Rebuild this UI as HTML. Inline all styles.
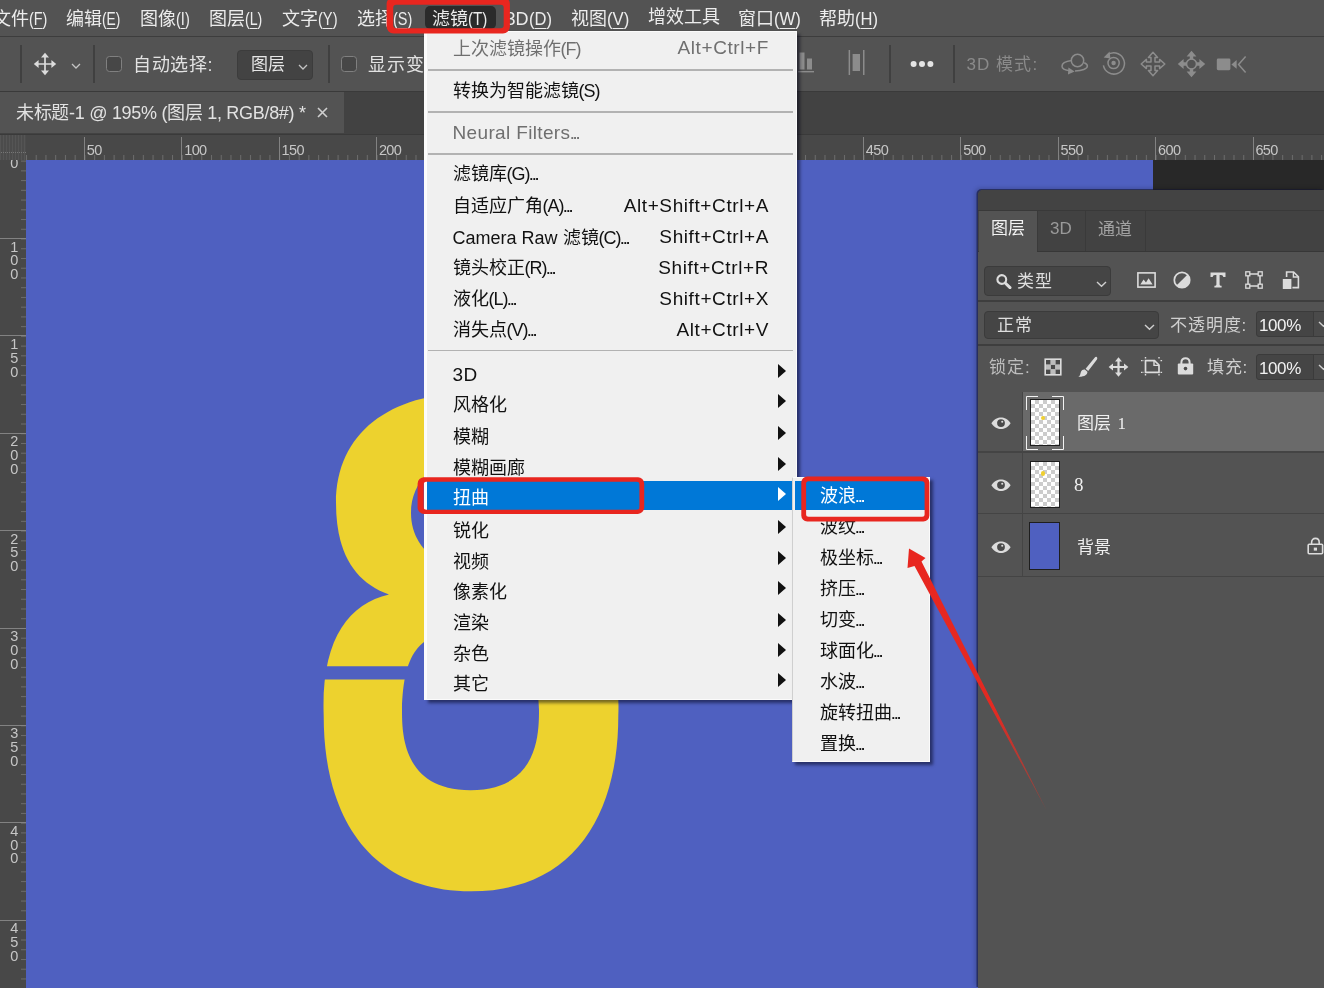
<!DOCTYPE html>
<html lang="zh-CN">
<head>
<meta charset="utf-8">
<title>Photoshop</title>
<style>
html,body{margin:0;padding:0;}
body{width:1324px;height:988px;position:relative;overflow:hidden;background:#535353;font-family:"Liberation Sans",sans-serif;color:#e6e6e6;}
#root{position:absolute;left:0;top:0;width:1324px;height:988px;overflow:hidden;will-change:transform;}
.a{position:absolute;}
.t{position:absolute;white-space:nowrap;line-height:1;}
u{text-decoration:underline;text-underline-offset:2.5px;text-decoration-thickness:1px;}
/* top menubar */
#menubar{left:0;top:0;width:1324px;height:36px;background:#535353;border-bottom:1px solid #3d3d3d;}
#menubar .t{font-size:18px;top:8.7px;color:#ececec;}
.mp{display:inline-block;font-size:19px;transform-origin:0 50%;}
/* options bar */
#optbar{left:0;top:37px;width:1324px;height:54px;background:#535353;border-bottom:2px solid #3a3a3a;}
.vsep{position:absolute;width:2px;background:#404040;top:8px;height:38px;}
/* tab bar */
#tabbar{left:0;top:92px;width:1324px;height:42px;background:#424242;}
#tab{left:0;top:0;width:344px;height:41px;background:#535353;}
/* rulers */
#hruler{left:0;top:134px;width:1324px;height:26px;background:#484848;border-top:1px solid #3a3a3a;box-sizing:border-box;}
#vruler{left:0;top:160px;width:26px;height:828px;background:#484848;overflow:hidden;}
.rl{position:absolute;font-size:14.5px;letter-spacing:-0.6px;color:#c6c6c6;line-height:1;}
/* canvas */
#canvas{left:26px;top:160px;width:1127px;height:828px;background:#4f60c0;}
#paste{left:1153px;top:160px;width:171px;height:828px;background:#282828;}
/* menus */
.menu{position:absolute;background:#f0f0f0;color:#000;box-shadow:3px 3px 3px rgba(0,0,20,.5);border:1px solid #fbfbfb;box-sizing:border-box;}
.menu .t{font-size:18px;color:#111;}
.menu .d{color:#6f6f6f;}
.menu .e{font-size:13px;letter-spacing:-0.7px;font-weight:bold;}
.menu .p{letter-spacing:-1px;}
.menu .n{font-size:19px;letter-spacing:.35px;}
.menu .k{font-size:19px;letter-spacing:.6px;}
.msep{position:absolute;height:2px;background:#b2b2b2;left:2px;right:3px;}
.arr{position:absolute;width:0;height:0;border-left:8px solid #111;border-top:7px solid transparent;border-bottom:7px solid transparent;}
/* layers panel */
#panel{left:978px;top:190px;width:346px;height:798px;background:#535353;border-top-left-radius:5px;box-shadow:-1.5px -1px 0 rgba(22,24,50,.6),-3px -2px 4px rgba(0,0,0,.18);overflow:hidden;}
#panel .t{color:#dedede;font-size:17px;}
</style>
</head>
<body>
<div id="root">

<!-- MENUBAR -->
<div id="menubar" class="a">
  <div class="a" style="left:425px;top:6px;width:71px;height:22.5px;background:#2b2b2b;border-radius:5px;"></div>
  <div class="t" style="left:-6.9px;">文件<span class="mp" style="transform:scaleX(0.758);">(<u>F</u>)</span></div>
  <div class="t" style="left:66.3px;">编辑<span class="mp" style="transform:scaleX(0.726);">(<u>E</u>)</span></div>
  <div class="t" style="left:140.0px;">图像<span class="mp" style="transform:scaleX(0.769);">(<u>I</u>)</span></div>
  <div class="t" style="left:209.1px;">图层<span class="mp" style="transform:scaleX(0.745);">(<u>L</u>)</span></div>
  <div class="t" style="left:282.0px;">文字<span class="mp" style="transform:scaleX(0.77);">(<u>Y</u>)</span></div>
  <div class="t" style="left:357.4px;">选择<span class="mp" style="transform:scaleX(0.762);">(<u>S</u>)</span></div>
  <div class="t" style="left:432.2px;">滤镜<span class="mp" style="transform:scaleX(0.795);">(<u>T</u>)</span></div>
  <div class="t" style="left:505.5px;">3D<span class="mp" style="transform:scaleX(0.871);">(<u>D</u>)</span></div>
  <div class="t" style="left:571.1px;">视图<span class="mp" style="transform:scaleX(0.88);">(<u>V</u>)</span></div>
  <div class="t" style="left:648.1px;top:8px;">增效工具</div>
  <div class="t" style="left:738.0px;">窗口<span class="mp" style="transform:scaleX(0.879);">(<u>W</u>)</span></div>
  <div class="t" style="left:818.9px;">帮助<span class="mp" style="transform:scaleX(0.872);">(<u>H</u>)</span></div>
</div>

<!-- OPTIONS BAR -->
<div id="optbar" class="a">
  <div class="vsep" style="left:20px;"></div>
  <div class="vsep" style="left:93px;"></div>
  <div class="vsep" style="left:328px;"></div>
  <div class="vsep" style="left:889px;"></div>
  <div class="vsep" style="left:953px;"></div>
  <svg class="a" style="left:32.6px;top:15.4px;" width="24" height="24" viewBox="0 0 24 24"><path d="M12,0.8 L16,5.6 H12.85 V11.15 H18.4 V8 L23.2,12 L18.4,16 V12.85 H12.85 V18.4 H16 L12,23.2 L8,18.4 H11.15 V12.85 H5.6 V16 L0.8,12 L5.6,8 V11.15 H11.15 V5.6 H8 Z" fill="#dcdcdc"/></svg>
  <svg class="a" style="left:71px;top:26px;" width="10" height="7" viewBox="0 0 10 7"><path d="M1,1 L5,5 L9,1" fill="none" stroke="#c4c4c4" stroke-width="1.3"/></svg>
  <div class="a" style="left:106px;top:19px;width:16px;height:16px;box-sizing:border-box;border:1px solid #808080;border-radius:3.5px;background:#474747;"></div>
  <div class="t" style="left:133px;top:19px;font-size:18px;letter-spacing:.6px;color:#e2e2e2;">自动选择:</div>
  <div class="a" style="left:237px;top:13px;width:76px;height:30px;box-sizing:border-box;background:#434343;border:1px solid #3c3c3c;border-radius:4px;"></div>
  <div class="t" style="left:251px;top:19px;font-size:17px;color:#e6e6e6;">图层</div>
  <svg class="a" style="left:298px;top:27px;" width="10" height="7" viewBox="0 0 10 7"><path d="M1,1 L5,5 L9,1" fill="none" stroke="#c4c4c4" stroke-width="1.3"/></svg>
  <div class="a" style="left:341px;top:19px;width:16px;height:16px;box-sizing:border-box;border:1px solid #808080;border-radius:3.5px;background:#474747;"></div>
  <div class="t" style="left:368px;top:19px;font-size:18px;letter-spacing:1px;color:#e2e2e2;">显示变换控件</div>
  <svg class="a" style="left:798px;top:13px;" width="17" height="23" viewBox="0 0 17 23"><rect x="1.5" y="2.5" width="5" height="17" fill="#8c8c8c"/><rect x="9" y="8.5" width="5" height="11" fill="#8c8c8c"/><rect x="0" y="21" width="16" height="1.4" fill="#8c8c8c"/></svg>
  <svg class="a" style="left:848px;top:12px;" width="18" height="27" viewBox="0 0 18 27"><rect x="0.6" y="1" width="1.5" height="25" fill="#8c8c8c"/><rect x="15" y="1" width="1.5" height="25" fill="#8c8c8c"/><rect x="4.6" y="5" width="7.4" height="17" fill="#8c8c8c"/></svg>
  <svg class="a" style="left:909px;top:22px;" width="26" height="10" viewBox="0 0 26 10"><circle cx="4.6" cy="5" r="3" fill="#e4e4e4"/><circle cx="13" cy="5" r="3" fill="#e4e4e4"/><circle cx="21.4" cy="5" r="3" fill="#e4e4e4"/></svg>
  <div class="t" style="left:966.5px;top:18.7px;font-size:17px;letter-spacing:1.1px;color:#8a8a8a;">3D 模式:</div>
  <svg class="a" style="left:1060px;top:14.5px;" width="29" height="24" viewBox="0 0 29 24"><circle cx="17.5" cy="8.5" r="6.2" fill="none" stroke="#8c8c8c" stroke-width="1.5"/><path d="M11.5,8.6 C6,9.4 2,11.6 2,14.2 C2,16.4 5.6,18.2 10,18.8 M15,19 C22,18.8 27.4,16.8 27.4,14 C27.4,12.8 26.2,11.6 24.2,10.8" fill="none" stroke="#8c8c8c" stroke-width="1.5"/><path d="M8.4,15.6 L14.6,19.4 L8,22.4 Z" fill="#8c8c8c"/></svg>
  <svg class="a" style="left:1100px;top:11.5px;" width="27" height="27" viewBox="0 0 27 27"><path d="M7.2,6.2 A10.6,10.6 0 1 1 3.4,16.4" fill="none" stroke="#8c8c8c" stroke-width="1.5"/><path d="M3.6,8.6 L9.6,2.6 L10.4,9.6 Z" fill="#8c8c8c"/><circle cx="13.6" cy="14" r="5.6" fill="none" stroke="#8c8c8c" stroke-width="1.5"/><circle cx="13.6" cy="14" r="2.2" fill="#8c8c8c"/></svg>
  <svg class="a" style="left:1139.5px;top:13.5px;" width="26" height="26" viewBox="0 0 26 26"><path d="M13,1.2 L17.6,6.4 H15 V11 H19.6 V8.4 L24.8,13 L19.6,17.6 V15 H15 V19.6 H17.6 L13,24.8 L8.4,19.6 H11 V15 H6.4 V17.6 L1.2,13 L6.4,8.4 V11 H11 V6.4 H8.4 Z" fill="none" stroke="#8c8c8c" stroke-width="1.5" stroke-linejoin="round"/></svg>
  <svg class="a" style="left:1177px;top:12.5px;" width="29" height="28" viewBox="0 0 29 28"><path d="M14.5,0.8 L19.4,6.6 H16.2 V9.4 H12.8 V6.6 H9.6 Z M14.5,27.2 L19.4,21.4 H16.2 V18.6 H12.8 V21.4 H9.6 Z M0.8,14 L6.6,9.1 V12.3 H9.4 V15.7 H6.6 V18.9 Z M28.2,14 L22.4,9.1 V12.3 H19.6 V15.7 H22.4 V18.9 Z" fill="#8c8c8c"/><circle cx="14.5" cy="14" r="5" fill="none" stroke="#8c8c8c" stroke-width="1.6"/></svg>
  <svg class="a" style="left:1216px;top:18px;" width="31" height="19" viewBox="0 0 31 19"><rect x="0.8" y="3.6" width="13.6" height="11.6" rx="1.4" fill="#8c8c8c"/><path d="M15.4,9.4 L20.6,5 V13.8 Z" fill="#8c8c8c"/><path d="M29.6,1.4 L22.6,9.4 L29.6,17.4" fill="none" stroke="#8c8c8c" stroke-width="1.5"/></svg>
</div>

<!-- TAB BAR -->
<div id="tabbar" class="a">
  <div id="tab" class="a">
    <div class="t" style="left:16px;top:11.8px;font-size:18px;letter-spacing:-0.3px;color:#e2e2e2;">未标题-1 @ 195% (图层 1, RGB/8#) *</div>
    <svg class="a" style="left:317px;top:15px;" width="11" height="11" viewBox="0 0 11 11"><path d="M1,1 L10,10 M10,1 L1,10" stroke="#cfcfcf" stroke-width="1.6"/></svg>
  </div>
</div>

<!-- RULERS -->
<div id="hruler" class="a">
  <svg class="a" style="left:26px;top:20px;" width="1298" height="5"><defs><pattern id="ph" x="9.71" y="0" width="9.738" height="5" patternUnits="userSpaceOnUse"><rect x="0" y="0" width="1" height="5" fill="#6c6c6c"/></pattern></defs><rect width="1298" height="5" fill="url(#ph)"/></svg>
  <div class="a" style="left:83.9px;top:2px;width:1px;height:23px;background:#828282;"></div>
  <div class="rl" style="left:86.8px;top:7.5px;">50</div>
  <div class="a" style="left:181.3px;top:2px;width:1px;height:23px;background:#828282;"></div>
  <div class="rl" style="left:184.2px;top:7.5px;">100</div>
  <div class="a" style="left:278.7px;top:2px;width:1px;height:23px;background:#828282;"></div>
  <div class="rl" style="left:281.6px;top:7.5px;">150</div>
  <div class="a" style="left:376.0px;top:2px;width:1px;height:23px;background:#828282;"></div>
  <div class="rl" style="left:378.9px;top:7.5px;">200</div>
  <div class="a" style="left:473.4px;top:2px;width:1px;height:23px;background:#828282;"></div>
  <div class="rl" style="left:476.3px;top:7.5px;">250</div>
  <div class="a" style="left:570.8px;top:2px;width:1px;height:23px;background:#828282;"></div>
  <div class="rl" style="left:573.7px;top:7.5px;">300</div>
  <div class="a" style="left:668.2px;top:2px;width:1px;height:23px;background:#828282;"></div>
  <div class="rl" style="left:671.1px;top:7.5px;">350</div>
  <div class="a" style="left:765.6px;top:2px;width:1px;height:23px;background:#828282;"></div>
  <div class="rl" style="left:768.5px;top:7.5px;">400</div>
  <div class="a" style="left:862.9px;top:2px;width:1px;height:23px;background:#828282;"></div>
  <div class="rl" style="left:865.8px;top:7.5px;">450</div>
  <div class="a" style="left:960.3px;top:2px;width:1px;height:23px;background:#828282;"></div>
  <div class="rl" style="left:963.2px;top:7.5px;">500</div>
  <div class="a" style="left:1057.7px;top:2px;width:1px;height:23px;background:#828282;"></div>
  <div class="rl" style="left:1060.6px;top:7.5px;">550</div>
  <div class="a" style="left:1155.1px;top:2px;width:1px;height:23px;background:#828282;"></div>
  <div class="rl" style="left:1158.0px;top:7.5px;">600</div>
  <div class="a" style="left:1252.5px;top:2px;width:1px;height:23px;background:#828282;"></div>
  <div class="rl" style="left:1255.4px;top:7.5px;">650</div>
  <div class="a" style="left:0;top:0;width:26px;height:25px;background:#4c4c4c repeating-linear-gradient(90deg,#555 0,#555 1px,transparent 1px,transparent 3px);box-sizing:border-box;"></div>
  <div class="a" style="left:1px;top:17px;width:25px;height:0;border-top:1px dotted #767676;"></div>
</div>
<div id="vruler" class="a">
  <svg class="a" style="left:21px;top:0;" width="5" height="828"><defs><pattern id="pv" x="0" y="0.63" width="5" height="9.736" patternUnits="userSpaceOnUse"><rect x="0" y="0" width="5" height="1" fill="#6c6c6c"/></pattern></defs><rect width="5" height="828" fill="url(#pv)"/></svg>
  <div class="rl" style="left:10px;top:-16.7px;line-height:13.8px;text-align:center;width:8px;">5<br>0</div>
  <div class="a" style="left:0;top:78.0px;width:26px;height:1px;background:#828282;"></div>
  <div class="rl" style="left:10px;top:80.6px;line-height:13.8px;text-align:center;width:8px;">1<br>0<br>0</div>
  <div class="a" style="left:0;top:175.4px;width:26px;height:1px;background:#828282;"></div>
  <div class="rl" style="left:10px;top:178.0px;line-height:13.8px;text-align:center;width:8px;">1<br>5<br>0</div>
  <div class="a" style="left:0;top:272.7px;width:26px;height:1px;background:#828282;"></div>
  <div class="rl" style="left:10px;top:275.3px;line-height:13.8px;text-align:center;width:8px;">2<br>0<br>0</div>
  <div class="a" style="left:0;top:370.1px;width:26px;height:1px;background:#828282;"></div>
  <div class="rl" style="left:10px;top:372.7px;line-height:13.8px;text-align:center;width:8px;">2<br>5<br>0</div>
  <div class="a" style="left:0;top:467.5px;width:26px;height:1px;background:#828282;"></div>
  <div class="rl" style="left:10px;top:470.1px;line-height:13.8px;text-align:center;width:8px;">3<br>0<br>0</div>
  <div class="a" style="left:0;top:564.8px;width:26px;height:1px;background:#828282;"></div>
  <div class="rl" style="left:10px;top:567.4px;line-height:13.8px;text-align:center;width:8px;">3<br>5<br>0</div>
  <div class="a" style="left:0;top:662.2px;width:26px;height:1px;background:#828282;"></div>
  <div class="rl" style="left:10px;top:664.8px;line-height:13.8px;text-align:center;width:8px;">4<br>0<br>0</div>
  <div class="a" style="left:0;top:759.5px;width:26px;height:1px;background:#828282;"></div>
  <div class="rl" style="left:10px;top:762.1px;line-height:13.8px;text-align:center;width:8px;">4<br>5<br>0</div>
</div>

<!-- CANVAS -->
<div id="canvas" class="a">
  <svg class="a" style="left:0;top:0;" width="1127" height="828" viewBox="26 160 1127 828">
    <defs>
      <clipPath id="cut"><rect x="300" y="380" width="340" height="286.3"/><rect x="300" y="679.6" width="340" height="230"/></clipPath>
      <filter id="soft"><feGaussianBlur stdDeviation="0.7"/></filter>
    </defs>
    <g clip-path="url(#cut)">
    <path filter="url(#soft)" fill="#edd22d" fill-rule="evenodd" d="
      M471,393 C390,393 336,433 336,503 C336,552 354,582 389,594.5
      C348,604 321,640 323.7,716 C323.7,815.2 368.4,891.3 471,891.3 C573.6,891.3 618.3,815.2 618.3,716
      C621,640 594,604 553,594.5 C588,582 606,552 606,503 C606,433 552,393 471,393 Z
      M471,457.5 C436.2,457.5 411,480.8 411,513 C411,545.2 436.2,568.5 471,568.5 C505.8,568.5 531,545.2 531,513 C531,480.8 505.8,457.5 471,457.5 Z
      M470.5,630 C421,630 403.5,650 402,710 C402,733.2 402.6,790.2 470.5,790.2 C538.4,790.2 539,733.2 539,710 C537.5,650 520,630 470.5,630 Z"/>
    </g>
  </svg>
</div>
<div id="paste" class="a"></div>

<!-- LAYERS PANEL -->
<div id="panel" class="a">
  <div class="a" style="left:0;top:0;width:346px;height:21px;background:#434343;border-bottom:1px solid #393939;box-sizing:border-box;"></div>
  <div class="a" style="left:0;top:21px;width:346px;height:41px;background:#424242;border-bottom:1px solid #373737;box-sizing:border-box;"></div>
  <div class="a" style="left:1px;top:21px;width:58px;height:42px;background:#535353;"></div>
  <div class="a" style="left:59px;top:21px;width:1px;height:40px;background:#3a3a3a;"></div>
  <div class="a" style="left:107px;top:21px;width:1px;height:40px;background:#3a3a3a;"></div>
  <div class="a" style="left:167px;top:21px;width:1px;height:40px;background:#3a3a3a;"></div>
  <div class="t" style="left:13px;top:30px;color:#f2f2f2;">图层</div>
  <div class="t" style="left:72px;top:30px;color:#9a9a9a;">3D</div>
  <div class="t" style="left:120px;top:30.5px;color:#a2a2a2;">通道</div>

  <div class="a" style="left:6px;top:76px;width:127px;height:30px;background:#454545;border:1px solid #3b3b3b;border-radius:4px;box-sizing:border-box;"></div>
  <div class="t" style="left:39px;top:83px;letter-spacing:1px;">类型</div>

  <div class="a" style="left:0px;top:110px;width:346px;height:2px;background:#3e3e3e;"></div>

  <div class="a" style="left:6px;top:121px;width:175px;height:28px;background:#454545;border:1px solid #3b3b3b;border-radius:4px;box-sizing:border-box;"></div>
  <div class="t" style="left:19px;top:127px;letter-spacing:.8px;">正常</div>
  <div class="t" style="left:192px;top:127px;letter-spacing:.9px;color:#cfcfcf;">不透明度:</div>
  <div class="a" style="left:278px;top:121px;width:58px;height:26px;background:#454545;border:1px solid #3b3b3b;border-radius:3px 0 0 3px;box-sizing:border-box;"></div>
  <div class="a" style="left:335px;top:121px;width:14px;height:26px;background:#4a4a4a;border:1px solid #3b3b3b;box-sizing:border-box;"></div>
  <div class="t" style="left:281px;top:126.5px;letter-spacing:-.4px;color:#f2f2f2;">100%</div>

  <div class="a" style="left:0px;top:154px;width:346px;height:2px;background:#3e3e3e;"></div>

  <div class="t" style="left:10.5px;top:168.5px;letter-spacing:1.2px;color:#bdbdbd;">锁定:</div>
  <div class="t" style="left:229px;top:168.5px;letter-spacing:.8px;color:#cfcfcf;">填充:</div>
  <div class="a" style="left:278px;top:164px;width:58px;height:26px;background:#454545;border:1px solid #3b3b3b;border-radius:3px 0 0 3px;box-sizing:border-box;"></div>
  <div class="a" style="left:335px;top:164px;width:14px;height:26px;background:#4a4a4a;border:1px solid #3b3b3b;box-sizing:border-box;"></div>
  <div class="t" style="left:281px;top:169.5px;letter-spacing:-.4px;color:#f2f2f2;">100%</div>

  <svg class="a" style="left:17px;top:83px;" width="17" height="16" viewBox="0 0 17 16"><circle cx="6.8" cy="6.5" r="4.4" fill="none" stroke="#dcdcdc" stroke-width="2.1"/><path d="M10.2,10 L15,14.6" stroke="#dcdcdc" stroke-width="3" stroke-linecap="round"/></svg>
  <svg class="a" style="left:118px;top:90.5px;" width="11" height="7" viewBox="0 0 11 7"><path d="M1,1 L5.5,5.3 L10,1" fill="none" stroke="#cfcfcf" stroke-width="1.4"/></svg>
  <svg class="a" style="left:166px;top:133.5px;" width="11" height="7" viewBox="0 0 11 7"><path d="M1,1 L5.5,5.3 L10,1" fill="none" stroke="#cfcfcf" stroke-width="1.4"/></svg>
  <svg class="a" style="left:340px;top:131px;" width="11" height="7" viewBox="0 0 11 7"><path d="M1,1 L5.5,5.3 L10,1" fill="none" stroke="#cfcfcf" stroke-width="1.4"/></svg>
  <svg class="a" style="left:340px;top:174px;" width="11" height="7" viewBox="0 0 11 7"><path d="M1,1 L5.5,5.3 L10,1" fill="none" stroke="#cfcfcf" stroke-width="1.4"/></svg>
  <svg class="a" style="left:159px;top:82px;" width="19" height="16" viewBox="0 0 19 16"><rect x="0.9" y="0.9" width="17.2" height="14.2" fill="none" stroke="#dcdcdc" stroke-width="1.6"/><path d="M3.3,12.6 L6.6,7.4 L9,10.6 L11.6,6.2 L15.6,12.6 Z" fill="#dcdcdc"/></svg>
  <svg class="a" style="left:195px;top:81px;" width="18" height="18" viewBox="0 0 18 18"><circle cx="9" cy="9" r="7.7" fill="none" stroke="#dcdcdc" stroke-width="1.7"/><path d="M14.6,3.4 A7.9,7.9 0 0 1 3.4,14.6 Z" fill="#dcdcdc"/></svg>
  <svg class="a" style="left:232px;top:82px;" width="16" height="16" viewBox="0 0 16 16"><path d="M0.5,0.5 H15.5 V5 H13.3 C13.1,3.6 12.4,2.9 11,2.9 H9.6 V12.2 C9.6,13.3 10.2,13.7 11.6,13.8 V15.6 H4.4 V13.8 C5.8,13.7 6.4,13.3 6.4,12.2 V2.9 H5 C3.6,2.9 2.9,3.6 2.7,5 H0.5 Z" fill="#dcdcdc"/></svg>
  <svg class="a" style="left:267px;top:81px;" width="18" height="18" viewBox="0 0 18 18"><rect x="3" y="3" width="12" height="12" fill="none" stroke="#dcdcdc" stroke-width="1.5"/><g fill="#535353" stroke="#dcdcdc" stroke-width="1.3"><rect x="0.8" y="0.8" width="4" height="4"/><rect x="13.2" y="0.8" width="4" height="4"/><rect x="0.8" y="13.2" width="4" height="4"/><rect x="13.2" y="13.2" width="4" height="4"/></g></svg>
  <svg class="a" style="left:304px;top:81px;" width="18" height="19" viewBox="0 0 18 19"><path d="M4.6,6 V1 H11.6 L16.4,5.8 V16.6 H10.4" fill="none" stroke="#dcdcdc" stroke-width="1.6"/><path d="M11.4,1 V6 H16.4" fill="none" stroke="#dcdcdc" stroke-width="1.4"/><rect x="0.8" y="8" width="8.6" height="10" fill="#dcdcdc"/></svg>
  <svg class="a" style="left:66px;top:168px;" width="18" height="18" viewBox="0 0 18 18"><rect x="0.4" y="0.4" width="17.2" height="17.2" fill="#dcdcdc"/><g fill="#4a4a4a"><rect x="2" y="2" width="4.6" height="4.6"/><rect x="11.4" y="2" width="4.6" height="4.6"/><rect x="6.7" y="6.7" width="4.6" height="4.6"/><rect x="2" y="11.4" width="4.6" height="4.6"/><rect x="11.4" y="11.4" width="4.6" height="4.6"/></g><g fill="#bdbdbd"><rect x="6.7" y="2" width="4.6" height="4.6"/><rect x="2" y="6.7" width="4.6" height="4.6"/><rect x="11.4" y="6.7" width="4.6" height="4.6"/><rect x="6.7" y="11.4" width="4.6" height="4.6"/></g></svg>
  <svg class="a" style="left:99px;top:166px;" width="21" height="22" viewBox="0 0 21 22"><path d="M19.6,1 C20.6,1.6 20.4,2.8 19.8,3.8 L11.2,15 L8.6,12.8 L17.6,1.8 C18.2,1 19,0.6 19.6,1 Z" fill="#dcdcdc"/><path d="M7.8,13.6 L10.4,15.8 C10.6,18.6 7.6,21 1.4,20.8 C3.6,19.4 3.2,17.6 4,15.8 C4.8,14 6.4,13.2 7.8,13.6 Z" fill="#dcdcdc"/></svg>
  <svg class="a" style="left:130px;top:167px;" width="21" height="20" viewBox="0 0 21 20"><path d="M10.5,0.3 L14,4.6 H11.6 V8.9 H16 V6.4 L20.4,10 L16,13.6 V11.1 H11.6 V15.4 H14 L10.5,19.7 L7,15.4 H9.4 V11.1 H5 V13.6 L0.6,10 L5,6.4 V8.9 H9.4 V4.6 H7 Z" fill="#dcdcdc"/></svg>
  <svg class="a" style="left:162px;top:166px;" width="24" height="21" viewBox="0 0 24 21"><path d="M5.5,4.6 H14.5 L19,9 V16.4 H5.5 Z" fill="none" stroke="#dcdcdc" stroke-width="1.7"/><path d="M14,4.6 V9.4 H19" fill="none" stroke="#dcdcdc" stroke-width="1.4"/><path d="M1,4.6 H4 M20.5,4.6 H23 M1,16.4 H4 M20.5,16.4 H23 M5.5,1 V3 M5.5,18 V20.2 M19,1 V3 M19,18 V20.2" stroke="#dcdcdc" stroke-width="1.4" stroke-dasharray="1.6 1"/></svg>
  <svg class="a" style="left:199px;top:167px;" width="17" height="18" viewBox="0 0 17 18"><path d="M4.4,7 V5.2 C4.4,2.8 6.2,1.2 8.5,1.2 C10.8,1.2 12.6,2.8 12.6,5.2 V7" fill="none" stroke="#dcdcdc" stroke-width="2"/><rect x="0.8" y="6.4" width="15.4" height="11" rx="1" fill="#dcdcdc"/><circle cx="8.5" cy="11.6" r="1.8" fill="#4a4a4a"/></svg>
  <svg class="a" style="left:329px;top:347px;" width="17" height="18" viewBox="0 0 17 18"><path d="M4.6,7.4 V5.4 C4.6,3 6.2,1.4 8.4,1.4 C10.6,1.4 12.2,3 12.2,5.4 V7.4" fill="none" stroke="#dcdcdc" stroke-width="1.6"/><rect x="1.2" y="7.2" width="14.4" height="9.6" rx="1" fill="none" stroke="#dcdcdc" stroke-width="1.6"/><rect x="6.8" y="10.6" width="3.2" height="3" fill="#dcdcdc"/></svg>
  <!-- layers -->
  <div class="a" style="left:45px;top:202px;width:301px;height:60px;background:#6a6a6a;"></div>
  <div class="a" style="left:0px;top:261px;width:346px;height:2px;background:#444;"></div>
  <div class="a" style="left:0px;top:323px;width:346px;height:1px;background:#444;"></div>
  <div class="a" style="left:0px;top:386px;width:346px;height:1px;background:#444;"></div>
  <div class="a" style="left:44px;top:202px;width:1px;height:184px;background:#454545;"></div>
  <svg class="a" style="left:13.2px;top:227.2px;" width="20" height="12.4" viewBox="0 0 21 13" preserveAspectRatio="none"><path d="M0.4,6.5 C3.4,2 7,0.5 10.5,0.5 C14,0.5 17.6,2 20.6,6.5 C17.6,11 14,12.5 10.5,12.5 C7,12.5 3.4,11 0.4,6.5 Z" fill="#dcdcdc"/><circle cx="10.5" cy="6.4" r="4.1" fill="#4a4a4a"/><circle cx="11.8" cy="5" r="1.1" fill="#dcdcdc"/></svg>
  <svg class="a" style="left:13.2px;top:289.2px;" width="20" height="12.4" viewBox="0 0 21 13" preserveAspectRatio="none"><path d="M0.4,6.5 C3.4,2 7,0.5 10.5,0.5 C14,0.5 17.6,2 20.6,6.5 C17.6,11 14,12.5 10.5,12.5 C7,12.5 3.4,11 0.4,6.5 Z" fill="#dcdcdc"/><circle cx="10.5" cy="6.4" r="4.1" fill="#4a4a4a"/><circle cx="11.8" cy="5" r="1.1" fill="#dcdcdc"/></svg>
  <svg class="a" style="left:13.2px;top:351.2px;" width="20" height="12.4" viewBox="0 0 21 13" preserveAspectRatio="none"><path d="M0.4,6.5 C3.4,2 7,0.5 10.5,0.5 C14,0.5 17.6,2 20.6,6.5 C17.6,11 14,12.5 10.5,12.5 C7,12.5 3.4,11 0.4,6.5 Z" fill="#dcdcdc"/><circle cx="10.5" cy="6.4" r="4.1" fill="#4a4a4a"/><circle cx="11.8" cy="5" r="1.1" fill="#dcdcdc"/></svg>
  <div class="a" style="left:52px;top:209px;width:30px;height:47px;border:1px solid #1e1e1e;box-sizing:border-box;background-color:#fff;background-image:linear-gradient(45deg,#ccc 25%,transparent 25%,transparent 75%,#ccc 75%),linear-gradient(45deg,#ccc 25%,transparent 25%,transparent 75%,#ccc 75%);background-size:8px 8px;background-position:0 0,4px 4px;"></div>
  <div class="a" style="left:52px;top:271px;width:30px;height:47px;border:1px solid #1e1e1e;box-sizing:border-box;background-color:#fff;background-image:linear-gradient(45deg,#ccc 25%,transparent 25%,transparent 75%,#ccc 75%),linear-gradient(45deg,#ccc 25%,transparent 25%,transparent 75%,#ccc 75%);background-size:8px 8px;background-position:0 0,4px 4px;"></div>
  <div class="a" style="left:51px;top:332px;width:31px;height:48px;border:1px solid #1e1e1e;box-sizing:border-box;background:#4f60c0;"></div>
  <div class="a" style="left:63px;top:226px;width:4px;height:4px;background:#f0d030;border-radius:2px;"></div>
  <div class="a" style="left:63px;top:281px;width:4px;height:5px;background:#f0d030;border-radius:2px;"></div>
  <svg class="a" style="left:48px;top:206px;" width="38" height="54" viewBox="0 0 38 54"><path d="M0.5,14 V0.5 H12 M26,0.5 H37.5 V14 M37.5,40 V53.5 H26 M12,53.5 H0.5 V40" fill="none" stroke="#f2f2f2" stroke-width="1"/></svg>
  <div class="t" style="left:98.5px;top:224.5px;font-family:'Liberation Serif',serif;font-size:17px;letter-spacing:.9px;color:#f0f0f0;">图层 1</div>
  <div class="t" style="left:96px;top:285px;font-family:'Liberation Serif',serif;font-size:19px;color:#f0f0f0;">8</div>
  <div class="t" style="left:99px;top:348.5px;font-family:'Liberation Serif',serif;font-size:17px;color:#f0f0f0;">背景</div>
</div>

<!-- FILTER MENU -->
<div id="m1" class="menu" style="left:425px;top:31px;width:372px;height:668.5px;box-shadow:-1px 0 0 #fbfbfb,3px 3px 3px rgba(0,0,20,.5);">
  <div class="a" style="left:0;top:0;width:1px;height:667px;background:#fdfdfd;"></div>
  <div class="msep" style="top:37px;"></div>
  <div class="msep" style="top:79px;"></div>
  <div class="msep" style="top:121px;"></div>
  <div class="msep" style="top:317.5px;height:1.5px;"></div>
  <div class="a" style="left:1px;top:448.5px;width:369px;height:29px;background:#0078d7;"></div>
  <div class="t d" style="left:26.5px;top:7.5px;">上次滤镜操作<span class="p">(F)</span></div>
  <div class="t d k" style="right:27px;top:6.2px;">Alt+Ctrl+F</div>
  <div class="t" style="left:26.5px;top:49.5px;">转换为智能滤镜<span class="p">(S)</span></div>
  <div class="t d n" style="left:26.5px;top:90.5px;">Neural Filters<span class="e">...</span></div>
  <div class="t" style="left:26.5px;top:133.4px;">滤镜库<span class="p">(G)</span><span class="e">...</span></div>
  <div class="t" style="left:26.5px;top:165.3px;">自适应广角<span class="p">(A)</span><span class="e">...</span></div>
  <div class="t k" style="right:27px;top:164.1px;">Alt+Shift+Ctrl+A</div>
  <div class="t" style="left:26.5px;top:196.5px;">Camera Raw 滤镜<span class="p">(C)</span><span class="e">...</span></div>
  <div class="t k" style="right:27px;top:195.3px;">Shift+Ctrl+A</div>
  <div class="t" style="left:26.5px;top:226.7px;">镜头校正<span class="p">(R)</span><span class="e">...</span></div>
  <div class="t k" style="right:27px;top:225.5px;">Shift+Ctrl+R</div>
  <div class="t" style="left:26.5px;top:258.0px;">液化<span class="p">(L)</span><span class="e">...</span></div>
  <div class="t k" style="right:27px;top:256.8px;">Shift+Ctrl+X</div>
  <div class="t" style="left:26.5px;top:289.0px;">消失点<span class="p">(V)</span><span class="e">...</span></div>
  <div class="t k" style="right:27px;top:287.8px;">Alt+Ctrl+V</div>
  <div class="t n" style="left:26.5px;top:333.2px;">3D</div>
  <div class="arr" style="left:352px;top:332.0px;border-left-color:#111;"></div>
  <div class="t" style="left:26.5px;top:364.2px;">风格化</div>
  <div class="arr" style="left:352px;top:362.3px;border-left-color:#111;"></div>
  <div class="t" style="left:26.5px;top:396.2px;">模糊</div>
  <div class="arr" style="left:352px;top:394.3px;border-left-color:#111;"></div>
  <div class="t" style="left:26.5px;top:427.2px;">模糊画廊</div>
  <div class="arr" style="left:352px;top:425.3px;border-left-color:#111;"></div>
  <div class="t" style="left:26.5px;top:456.8px;color:#fff;">扭曲</div>
  <div class="arr" style="left:352px;top:454.9px;border-left-color:#fff;"></div>
  <div class="t" style="left:26.5px;top:489.7px;">锐化</div>
  <div class="arr" style="left:352px;top:487.8px;border-left-color:#111;"></div>
  <div class="t" style="left:26.5px;top:520.7px;">视频</div>
  <div class="arr" style="left:352px;top:518.8px;border-left-color:#111;"></div>
  <div class="t" style="left:26.5px;top:550.7px;">像素化</div>
  <div class="arr" style="left:352px;top:548.8px;border-left-color:#111;"></div>
  <div class="t" style="left:26.5px;top:582.4px;">渲染</div>
  <div class="arr" style="left:352px;top:580.5px;border-left-color:#111;"></div>
  <div class="t" style="left:26.5px;top:612.9px;">杂色</div>
  <div class="arr" style="left:352px;top:611.0px;border-left-color:#111;"></div>
  <div class="t" style="left:26.5px;top:643.2px;">其它</div>
  <div class="arr" style="left:352px;top:641.3px;border-left-color:#111;"></div>
</div>
<div id="m2" class="menu" style="border-left-color:#cfcfcf;left:792px;top:477px;width:138px;height:285px;">
  <div class="a" style="left:2px;top:2.5px;width:132px;height:29px;background:#0078d7;"></div>
  <div class="t" style="left:26.5px;top:8.5px;color:#fff;">波浪<span class="e">...</span></div>
  <div class="t" style="left:26.5px;top:39.5px;">波纹<span class="e">...</span></div>
  <div class="t" style="left:26.5px;top:71.3px;">极坐标<span class="e">...</span></div>
  <div class="t" style="left:26.5px;top:102.2px;">挤压<span class="e">...</span></div>
  <div class="t" style="left:26.5px;top:133.2px;">切变<span class="e">...</span></div>
  <div class="t" style="left:26.5px;top:164.2px;">球面化<span class="e">...</span></div>
  <div class="t" style="left:26.5px;top:194.7px;">水波<span class="e">...</span></div>
  <div class="t" style="left:26.5px;top:226.2px;">旋转扭曲<span class="e">...</span></div>
  <div class="t" style="left:26.5px;top:257.2px;">置换<span class="e">...</span></div>
</div>

<!-- RED ANNOTATIONS -->
<svg class="a" style="left:0;top:0;pointer-events:none;" width="1324" height="988" viewBox="0 0 1324 988">
  <defs>
    <linearGradient id="ag" gradientUnits="userSpaceOnUse" x1="916" y1="562" x2="1047" y2="811">
      <stop offset="0" stop-color="#e8261f"/><stop offset="0.6" stop-color="#e32a22"/><stop offset="1" stop-color="#c23a30" stop-opacity="0.5"/>
    </linearGradient>
  </defs>
  <path fill="#e8261f" fill-rule="evenodd" d="M393.6,-3 H502.9 A7,7 0 0 1 509.9,4 V26.6 A7,7 0 0 1 502.9,33.6 H393.6 A7,7 0 0 1 386.6,26.6 V4 A7,7 0 0 1 393.6,-3 Z M396.2,4.8 H500.7 A3,3 0 0 1 503.7,7.8 V25.3 A3,3 0 0 1 500.7,28.3 H396.2 A3,3 0 0 1 393.2,25.3 V7.8 A3,3 0 0 1 396.2,4.8 Z"/>
  <path fill="#e8261f" fill-rule="evenodd" d="M424.1,477.2 H637.7 A6.5,6.5 0 0 1 644.2,483.7 V507.5 A6.5,6.5 0 0 1 637.7,514 H424.1 A6.5,6.5 0 0 1 417.6,507.5 V483.7 A6.5,6.5 0 0 1 424.1,477.2 Z M426.2,481.8 H636.9 A2.5,2.5 0 0 1 639.4,484.3 V507.3 A2.5,2.5 0 0 1 636.9,509.8 H426.2 A2.5,2.5 0 0 1 423.7,507.3 V484.3 A2.5,2.5 0 0 1 426.2,481.8 Z"/>
  <path fill="#e8261f" fill-rule="evenodd" d="M807.3,476.4 H923.4 A6,6 0 0 1 929.4,482.4 V515.6 A6,6 0 0 1 923.4,521.6 H807.3 A6,6 0 0 1 801.3,515.6 V482.4 A6,6 0 0 1 807.3,476.4 Z M808.6,481.2 H922.1 A2.5,2.5 0 0 1 924.6,483.7 V514.3 A2.5,2.5 0 0 1 922.1,516.8 H808.6 A2.5,2.5 0 0 1 806.1,514.3 V483.7 A2.5,2.5 0 0 1 808.6,481.2 Z"/>
  <path d="M909,548.5 L925.5,558 L921.5,561.5 L1047,811 L914.5,566 L907.5,568 Z" fill="url(#ag)"/>
</svg>

</div>
</body>
</html>
